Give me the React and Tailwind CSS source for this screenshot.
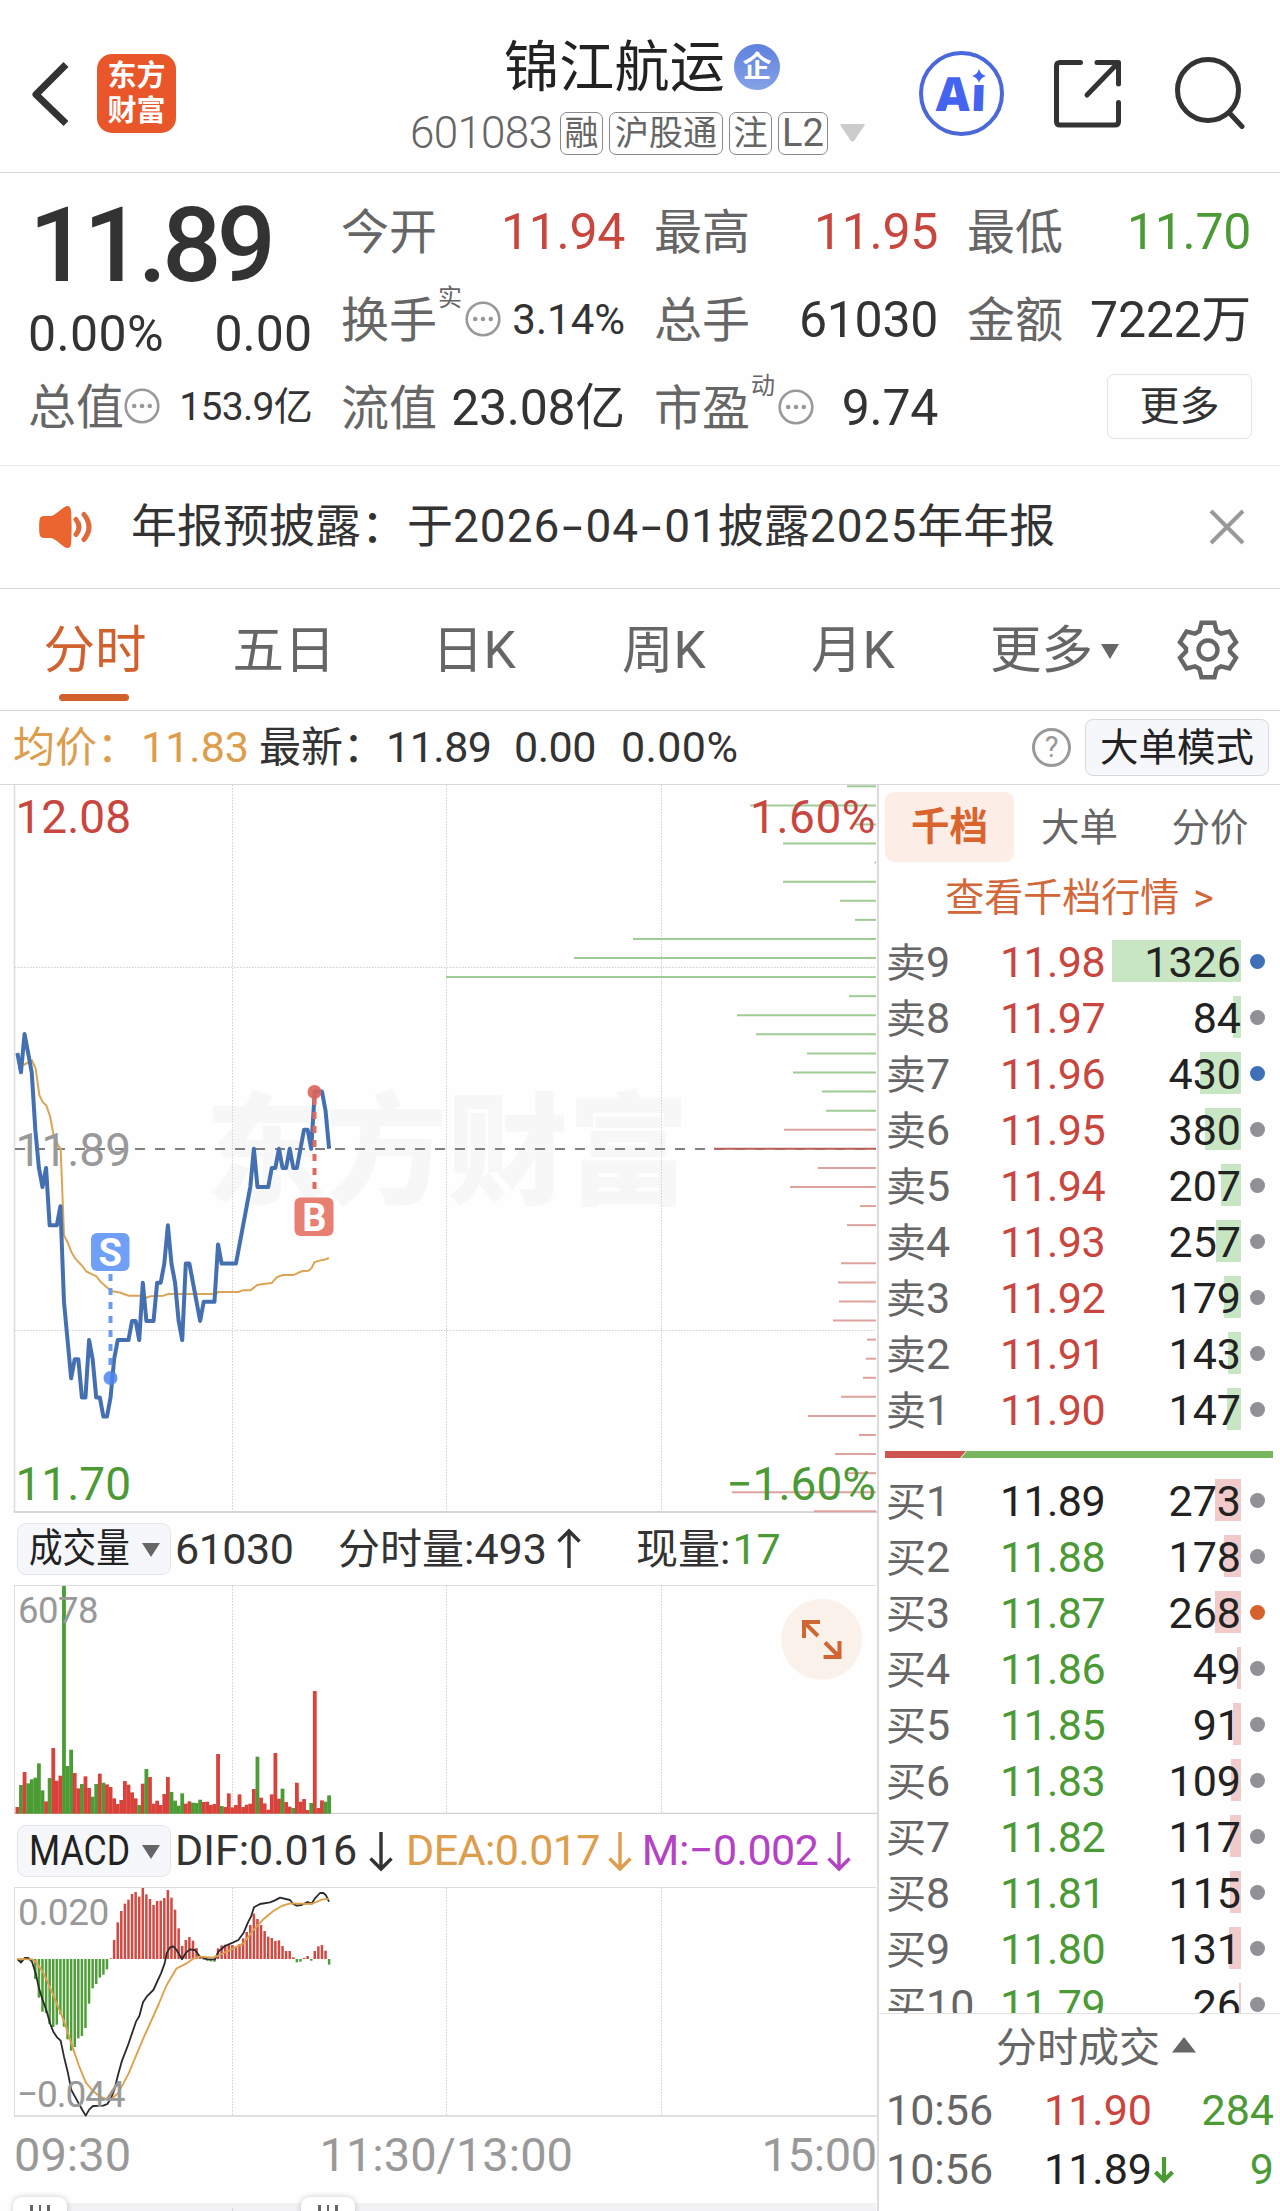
import React from "react";

const RED = "#c8463e";
const GREEN = "#4c9a35";

/* ---------- intraday data ---------- */

// price per minute, in ticks of 0.01 relative to the previous close
const ticks = [
  5, 4, 6, 5, 4, 1, -1, -2, -1, -4, -4, -4, -3, -8, -10, -12, -11, -11, -13, -13, -10, -11, -13, -13, -14, -14, -13, -11,
  -10, -10, -10, -10, -9, -9, -10, -7, -9, -9, -9, -7, -7, -6, -4, -6, -7, -9, -10, -6, -6, -7, -8, -9, -8, -8, -8, -8,
  -5, -6, -6, -6, -6, -6, -5, -4, -3, -2, 0, -2, -2, -2, -2, -1, -1, 0, -1, -1, 0, -1, -1, 0, 1, 1, 0, 3, 3, 3, 2, 0,
];

const average = [
  [52, 578], [63, 600], [74, 603], [85, 598], [96, 594], [107, 612], [118, 668], [128, 682], [139, 690], [150, 712],
  [160, 750], [171, 770], [182, 782], [192, 965], [203, 980], [214, 1000], [225, 1013], [236, 1022], [247, 1030],
  [260, 1042], [290, 1052], [300, 1062], [333, 1083], [360, 1086], [386, 1093], [430, 1093], [440, 1097], [451, 1094],
  [490, 1093], [505, 1089], [645, 1089], [655, 1085], [715, 1085], [730, 1081], [752, 1081], [772, 1070], [790, 1068],
  [815, 1066], [830, 1054], [848, 1049], [880, 1049], [905, 1041], [925, 1040], [935, 1034], [943, 1022], [955, 1019],
  [975, 1016], [987, 1013],
];

// resting order lengths per price level, from the top of the range
const depth = [
  29, 126, 21, 93, 1.5, 93, 36, 21, 243, 302, 430, 27, 139, 120, 69, 83, 54, 50, 92, 162, 58, 86, 16, 29, 0, 35, 38, 37,
  43, 9, 10, 13, 35, 68, 17, 41, 29, 144, 62,
];

const volume = [
  [20, 1], [86, 0], [125, 1], [91, 0], [103, 0], [108, 0], [151, 0], [70, 0], [37, 1], [107, 0], [197, 1], [99, 1],
  [114, 1], [683, 0], [143, 0], [192, 0], [122, 1], [76, 1], [89, 0], [112, 1], [77, 1], [51, 0], [89, 0], [120, 1],
  [93, 0], [88, 1], [80, 1], [46, 1], [29, 1], [41, 1], [98, 1], [87, 1], [64, 1], [46, 1], [26, 0], [90, 1], [134, 0],
  [110, 1], [30, 1], [39, 1], [26, 1], [59, 1], [110, 1], [65, 0], [39, 0], [24, 0], [61, 0], [30, 1], [37, 1], [33, 0],
  [32, 0], [42, 0], [35, 1], [36, 1], [26, 1], [29, 1], [179, 1], [23, 0], [20, 1], [61, 1], [19, 1], [26, 1], [58, 1],
  [20, 1], [27, 1], [30, 1], [74, 1], [171, 0], [48, 1], [31, 1], [12, 1], [58, 1], [182, 1], [45, 1], [75, 0], [35, 1],
  [21, 1], [17, 0], [93, 1], [36, 1], [44, 1], [11, 1], [32, 0], [368, 1], [17, 1], [40, 1], [36, 0], [55, 0],
];

const macd = [
  0, -8, 2, 0, -6, -60, -116, -158, -162, -195, -204, -197, -166, -203, -241, -275, -264, -238, -231, -207, -134, -88,
  -75, -56, -47, -31, 2, 57, 110, 144, 166, 178, 195, 201, 187, 213, 194, 180, 162, 174, 175, 183, 207, 184, 148, 92,
  39, 57, 66, 55, 33, 7, -2, -5, -7, -8, 32, 41, 43, 44, 42, 39, 45, 62, 81, 102, 136, 120, 102, 84, 67, 63, 54, 56, 39,
  24, 24, 5, -10, -8, 3, 9, -5, 24, 38, 42, 25, -17,
];

const dif = [
  [52, 387], [63, 398], [74, 384], [85, 384], [96, 395], [107, 430], [117, 475], [128, 510], [139, 540], [150, 580],
  [160, 605], [171, 622], [182, 632], [192, 680], [203, 725], [214, 780], [225, 800], [236, 820], [247, 840], [257, 857],
  [268, 838], [279, 828], [310, 827], [322, 822], [333, 805], [343, 780], [354, 735], [365, 695], [386, 640], [408, 575],
  [418, 558], [429, 517], [440, 500], [460, 480], [483, 430], [494, 400], [500, 370], [510, 352], [520, 349], [530, 360],
  [546, 388], [558, 368], [570, 358], [585, 360], [600, 380], [622, 388], [645, 388], [655, 365], [675, 348], [700, 337],
  [715, 330], [730, 310], [745, 275], [753, 260], [762, 232], [780, 222], [810, 217], [825, 211], [840, 203], [870, 210],
  [880, 222], [890, 227], [905, 225], [922, 216], [935, 221], [945, 205], [960, 189], [970, 189], [978, 196], [987, 215],
];

const dea = [
  [52, 387], [96, 388], [107, 395], [128, 425], [150, 472], [192, 573], [214, 640], [236, 705], [257, 757], [279, 783],
  [300, 800], [322, 808], [333, 808], [354, 790], [386, 730], [430, 625], [475, 525], [500, 465], [530, 415], [560, 400],
  [580, 386], [600, 380], [640, 383], [665, 372], [700, 355], [730, 340], [760, 300], [790, 268], [820, 243], [845, 228],
  [870, 220], [935, 222], [965, 209], [987, 206],
];

const minuteX = (k) => 17.4 + k * 3.583;
const thirds = (points) => points.map(([x, y]) => `${x / 3},${1830 + y / 3}`).join(" ");

/* ---------- order book ---------- */

const asks = [
  ["卖9", "11.98", "1326", 129, "b"],
  ["卖8", "11.97", "84", 8, "n"],
  ["卖7", "11.96", "430", 41, "b"],
  ["卖6", "11.95", "380", 36, "n"],
  ["卖5", "11.94", "207", 20, "n"],
  ["卖4", "11.93", "257", 25, "n"],
  ["卖3", "11.92", "179", 17, "n"],
  ["卖2", "11.91", "143", 13, "n"],
  ["卖1", "11.90", "147", 14, "n"],
];

const bids = [
  ["买1", "11.89", "273", 26, "n"],
  ["买2", "11.88", "178", 17, "n"],
  ["买3", "11.87", "268", 26, "o"],
  ["买4", "11.86", "49", 4, "n"],
  ["买5", "11.85", "91", 8, "n"],
  ["买6", "11.83", "109", 10, "n"],
  ["买7", "11.82", "117", 11, "n"],
  ["买8", "11.81", "115", 11, "n"],
  ["买9", "11.80", "131", 12, "n"],
  ["买10", "11.79", "26", 2, "n"],
];

const dotClass = { b: "bg-[#3f6fb8]", n: "bg-[#909096]", o: "bg-[#d5622b]" };

function BookRow({ row, bar, priceClass }) {
  const [label, price, amount, width, dot] = row;
  return (
    <div className="flex h-14 shrink-0 items-center text-[43px] leading-none">
      <div className="w-[90px] whitespace-nowrap pl-[7px] pt-[2px] text-[#666]">
        <span className="text-[40px]">{label[0]}</span>
        {label.slice(1)}
      </div>
      <div className={`w-[136px] pt-[2px] text-right tracking-[-0.6px] ${priceClass}`}>{price}</div>
      <div className="relative flex h-[42px] w-[136px] items-center justify-end">
        <div className={`absolute inset-y-0 right-0 ${bar}`} style={{ width }} />
        <span className="relative pt-[2px] text-[#222]">{amount}</span>
      </div>
      <div className={`ml-[9px] size-[15px] rounded-full ${dotClass[dot]}`} />
    </div>
  );
}

/* ---------- small pieces ---------- */

function Tag({ children, pad = "px-[3.5px]" }) {
  return (
    <span className={`flex h-[43px] items-center whitespace-nowrap rounded-[7px] border-[1.5px] border-[#8a8a8a] text-[34px] leading-none text-[#666] ${pad}`}>
      {children}
    </span>
  );
}

function Dots() {
  return (
    <svg className="size-9 shrink-0" viewBox="0 0 36 36" fill="#999">
      <circle cx="18" cy="18" r="16.3" fill="none" stroke="#999" strokeWidth="2.6" />
      <circle cx="10.2" cy="18" r="2.3" />
      <circle cx="18" cy="18" r="2.3" />
      <circle cx="25.8" cy="18" r="2.3" />
    </svg>
  );
}

function Quote({ label, sup, dots, value, size = "text-[50px] tracking-[-0.3px]", className = "text-[#333]" }) {
  return (
    <div className="flex h-[88px] items-center text-[48px] leading-none">
      <span className="pt-[3px] text-[#666]">{label}</span>
      {sup && <span className="relative -top-[21px] w-7 pl-px text-[24px] text-[#666]">{sup}</span>}
      {dots && <Dots />}
      <span className={`ml-auto whitespace-nowrap pt-[2px] ${size} ${className}`}>{value}</span>
    </div>
  );
}

function Arrow({ up, className }) {
  return (
    <svg className={`h-[42px] w-6 shrink-0 ${className}`} viewBox="0 0 24 42" fill="none" stroke="currentColor" strokeWidth="3.4">
      {up ? <path d="M12 40V3M1.500 13.500L12 3l10.500 10.500" /> : <path d="M12 2v37M1.500 28.500L12 39l10.500-10.500" />}
    </svg>
  );
}

function Picker({ children, scale }) {
  return (
    <div className="relative ml-[17px] flex h-[52px] w-[154px] items-center rounded-[9px] border border-[#e3e5e9] bg-[#f6f7fa] pl-[11px]">
      <span className={`origin-left whitespace-nowrap leading-none text-[#222] ${scale}`}>{children}</span>
      <svg className="absolute right-[10px] top-[19px] h-[14px] w-[18px]" viewBox="0 0 18 14" fill="#666">
        <path d="M0 0h18L9 14z" />
      </svg>
    </div>
  );
}

function Grid({ top, bottom }) {
  return (
    <g stroke="#cfcfcf" strokeWidth="1" strokeDasharray="1.500 1.500">
      {[232.5, 446.5, 661.5].map((x) => (
        <path key={x} d={`M${x} ${top}V${bottom}`} />
      ))}
    </g>
  );
}

/* ---------- sections ---------- */

function Header() {
  return (
    <header className="flex h-[173px] border-b border-[#d8d8d8]">
      <div className="flex w-[410px] items-start pl-[30px] pt-[54px]">
        <svg className="mt-[6px] h-[68px] w-10" viewBox="0 0 40 68" fill="none" stroke="#333" strokeWidth="7" strokeLinejoin="round">
          <path d="M36 4.500L6 34.500l30 29" />
        </svg>
        <div className="ml-[27px] flex size-[79px] flex-col items-center justify-center gap-[5px] rounded-[15px] bg-[#e9562a] text-[29px] font-bold leading-[30px] text-white">
          <span>东方</span>
          <span>财富</span>
        </div>
      </div>
      <div className="flex w-[456px] flex-col items-center pt-[38px]">
        <div className="flex h-[58px] items-center pl-[8px] text-[55px] leading-none text-[#222]">
          <span className="tracking-[0.3px]">锦江航运</span>
          <span className="ml-[9px] flex size-[46px] items-center justify-center rounded-full bg-linear-to-b from-[#5f80de] to-[#84a2e6] text-[29px] font-bold text-white">
            企
          </span>
        </div>
        <div className="mt-[15px] flex w-full items-center gap-[6px] text-[44px] leading-none text-[#666]">
          <span className="w-[144px] font-light tracking-[-0.7px]">601083</span>
          <Tag>融</Tag>
          <Tag pad="px-[5px]">沪股通</Tag>
          <Tag>注</Tag>
          <Tag pad="px-[3px]">
            <span className="text-[38px]">L2</span>
          </Tag>
          <svg className="ml-[6px] h-[18px] w-[25px] shrink-0" viewBox="0 0 25 18" fill="#ccc">
            <path d="M1.500 0h22q2 0 1 1.500L14 17q-1.500 1.500-3 0L.5 1.500Q-.5 0 1.500 0z" />
          </svg>
        </div>
      </div>
      <div className="flex items-start pl-[53px] pt-[51px]">
        <div className="relative flex size-[85px] items-center justify-center rounded-full border-4 border-[#4a68da]">
          <span className="skew-x-[-2deg] font-['Open_Sans','Noto_Sans',sans-serif] text-[47px] font-extrabold leading-none tracking-[1px] text-[#4463ee]">
            Ai
          </span>
          <svg className="absolute left-[44px] top-[10px] h-[22px] w-6" viewBox="0 0 24 22">
            <rect x="3" y="2" width="18" height="18" fill="#fff" />
            <path d="M12 4q1.600 5.500 7 7-5.400 1.500-7 7-1.600-5.500-7-7 5.400-1.500 7-7z" fill="#4463ee" />
          </svg>
        </div>
        <svg className="ml-[49px] mt-[7px] size-[72px]" viewBox="0 0 72 72" fill="none" stroke="#333" strokeWidth="5" strokeLinecap="round" strokeLinejoin="round">
          <path d="M27.500 4.500H7q-3.500 0-3.500 3.500v55.500q0 3.500 3.500 3.500h55q3.500 0 3.500-3.500V44.500M44 4.500h21.500V26M64 6L34 37" />
        </svg>
        <svg className="ml-[50px] mt-[4px] size-[74px]" viewBox="0 0 74 74" fill="none" stroke="#333" strokeWidth="5" strokeLinecap="round">
          <circle cx="33" cy="35" r="30.500" />
          <path d="M54 57.500l13 14" />
        </svg>
      </div>
    </header>
  );
}

function Summary() {
  return (
    <section className="flex h-[293px] gap-[29px] border-b border-[#ececec] pl-[28px]">
      <div className="flex w-[284px] flex-col leading-none text-[#333]">
        <div className="flex h-[142px] items-center pl-px pt-[3px] text-[104px] font-medium tracking-[-4.6px]">11.89</div>
        <div className="flex h-9 items-center justify-between pt-[2px] text-[50px]">
          <span className="tracking-[0.4px]">0.00%</span>
          <span>0.00</span>
        </div>
        <div className="mt-[11px]">
          <Quote label="总值" dots size="text-[39px] tracking-[-0.7px]" value="153.9亿" />
        </div>
      </div>
      <div className="w-[284px] pt-[14px]">
        <Quote label="今开" value="11.94" className="text-[#c8463e]" />
        <Quote label="换手" sup="实" dots size="text-[42px]" value="3.14%" />
        <Quote label="流值" value="23.08亿" />
      </div>
      <div className="w-[284px] pt-[14px]">
        <Quote label="最高" value="11.95" className="text-[#c8463e]" />
        <Quote label="总手" value="61030" />
        <Quote label="市盈" sup="动" dots value="9.74" />
      </div>
      <div className="w-[284px] pt-[14px]">
        <Quote label="最低" value="11.70" className="text-[#4c9a35]" />
        <Quote label="金额" value="7222万" />
        <div className="ml-auto mr-[-1px] mt-[11px] flex h-[65px] w-[145px] items-center justify-center rounded-[7px] border border-[#e2e2e2] pt-px text-[40px] leading-none text-[#333]">
          更多
        </div>
      </div>
    </section>
  );
}

function Notice() {
  return (
    <section className="flex h-[123px] items-center border-b border-[#d8d8d8] pl-[39px] text-[46px] leading-none text-[#333]">
      <svg className="h-[44px] w-[54px]" viewBox="0 0 54 44">
        <path d="M5 11h7.500C18 9 23 3 27 1.200q4-1.400 5 4 1.200 17 0 34-1 5-5 3.500C23 41 18 35 12.500 33H5q-4 0-4.500-4-.8-7 0-14Q1 11 5 11z" fill="#ea6530" />
        <path d="M37 14.500q6 7.500 0 15M45 9.500q10 12.500 0 25" fill="none" stroke="#dc6a3c" strokeWidth="5" strokeLinecap="round" />
      </svg>
      <p className="mb-[2px] ml-[38px] whitespace-nowrap">
        年报预披露：于
        <span className="tracking-[1px]">2026</span>
        <span className="inline-block w-[25px] origin-center scale-x-[1.6] text-center">-</span>
        <span className="tracking-[1px]">04</span>
        <span className="inline-block w-[25px] origin-center scale-x-[1.6] text-center">-</span>
        <span className="tracking-[1px]">01</span>
        披露
        <span className="tracking-[1px]">2025</span>
        年年报
      </p>
      <svg className="ml-auto mr-[35px] size-9" viewBox="0 0 36 36" stroke="#999" strokeWidth="4">
        <path d="M2 2l32 32M34 2L2 34" />
      </svg>
    </section>
  );
}

function Tabs() {
  return (
    <nav className="flex h-[122px] items-center border-b border-[#d8d8d8] text-[51.5px] leading-none text-[#666]">
      <div className="relative flex h-full w-[190px] items-center justify-center pt-[3px] text-[#d0622f]">
        分时
        <span className="absolute bottom-[9px] left-[59px] h-[7px] w-[70px] rounded-full bg-[#d0602c]" />
      </div>
      <div className="w-[188px] pt-[3px] text-center">五日</div>
      <div className="w-[192px] pt-[3px] text-center">日K</div>
      <div className="w-[188px] pt-[3px] text-center">周K</div>
      <div className="w-[190px] pt-[3px] text-center">月K</div>
      <div className="flex items-center pl-[42px] pt-[3px]">
        更多
        <svg className="ml-[8px] h-[15px] w-[18px]" viewBox="0 0 18 15" fill="#666">
          <path d="M0 0h18L9 15z" />
        </svg>
      </div>
      <svg className="ml-[57px] h-[62px] w-[64px]" viewBox="-32 -31 64 62" fill="none" stroke="#666" strokeWidth="4.400">
        <path d="M-6.500 -27.300H6.500L8.700 -18.800L13 -16.300L21.500 -18.500L28 -7.800L22 -1.500V1.500L28 7.800L21.500 18.500L13 16.300L8.700 18.800L6.500 27.300H-6.500L-8.700 18.800L-13 16.300L-21.500 18.500L-28 7.800L-22 1.500V-1.500L-28 -7.800L-21.500 -18.500L-13 -16.300L-8.700 -18.800Z" />
        <circle r="9.500" />
      </svg>
    </nav>
  );
}

function InfoBar() {
  return (
    <section className="flex h-[74px] items-center border-b border-[#d8d8d8] pl-[13px] text-[43px] leading-none text-[#333]">
      <span className="w-[246px] text-[#dc9d4c]">
        <span className="inline-block w-[128px] text-[42px]">均价：</span>
        11.83
      </span>
      <span className="w-[255px]">
        <span className="inline-block w-[127px] text-[42px]">最新：</span>
        <span className="tracking-[-0.5px]">11.89</span>
      </span>
      <span className="w-[107px] tracking-[-0.5px]">0.00</span>
      <span className="tracking-[0.4px]">0.00%</span>
      <div className="ml-auto mr-[11px] flex items-center gap-[14px]">
        <div className="flex size-[39px] items-center justify-center rounded-full border-[3px] border-[#999] text-[29px] text-[#999]">
          ?
        </div>
        <div className="flex h-[57px] w-[184px] items-center justify-center rounded-[8px] border border-[#d5d8de] bg-[#f6f7fb] pt-[2px] text-[38.5px] text-[#222]">
          大单模式
        </div>
      </div>
    </section>
  );
}

function PriceChart() {
  const line = ticks.map((t, k) => `${minuteX(k)},${1148.8 - t * 19.13}`).join(" ");
  const avg = average.map(([x, y]) => `${x / 3},${780 + y / 2.119}`).join(" ");
  return (
    <svg className="block h-[728px] w-[877px] shrink-0" viewBox="0 785 877 728" fontSize="46">
      <text x="205" y="1194" fontSize="121" fontWeight="900" fill="#f7f7f7">
        东方财富
      </text>
      <Grid top={785} bottom={1512} />
      <g stroke="#cfcfcf" strokeDasharray="1.500 1.500">
        <path d="M15 967.500H876M15 1330.500H876" />
      </g>
      <path d="M14.500 785V1512" stroke="#dcdcdc" strokeWidth="1.500" />
      <path d="M14 1512H877" stroke="#d5d5d5" strokeWidth="2" />
      <path d="M15 1149H876" stroke="#808080" strokeWidth="2" strokeDasharray="10 10" />
      {depth.map((w, i) => (
        <path
          key={i}
          d={`M876 ${786.3 + i * 19.08}h${-w}`}
          stroke={i < 18 ? "#9fcb95" : i === 19 ? "#b9605b" : "#dda29e"}
          strokeWidth="2"
        />
      ))}
      <polyline points={avg} fill="none" stroke="#dca455" strokeWidth="2" />
      <polyline points={line} fill="none" stroke="#4470b1" strokeWidth="4" strokeLinejoin="round" />
      <g fill={RED}>
        <text x="15.500" y="833">12.08</text>
        <text x="876" y="833" textAnchor="end" letterSpacing=".5">1.60%</text>
      </g>
      <text x="15.500" y="1166" fill="#999">11.89</text>
      <g fill={GREEN}>
        <text x="15.500" y="1499.500">11.70</text>
        <text x="876" y="1499.500" textAnchor="end">−1.60%</text>
      </g>
      <path d="M110.500 1274V1372" stroke="#6b9af0" strokeWidth="4" strokeDasharray="7 7" />
      <circle cx="110.500" cy="1378" r="7" fill="#4d85ee" fillOpacity=".85" />
      <rect x="91" y="1233" width="38.500" height="38" rx="6" fill="#6f9ff6" />
      <path d="M314.500 1098V1196" stroke="#df6a60" strokeWidth="4" strokeDasharray="7 7" />
      <circle cx="314.500" cy="1092" r="7" fill="#dd6459" fillOpacity=".9" />
      <rect x="294.500" y="1197.500" width="39" height="38.500" rx="6" fill="#e77f72" />
      <g fill="#fff" fontSize="38" fontWeight="700" textAnchor="middle">
        <text x="110.300" y="1265.500">S</text>
        <text x="314.300" y="1230.500">B</text>
      </g>
    </svg>
  );
}

function VolumeChart() {
  return (
    <svg className="block h-[229px] w-[877px] shrink-0" viewBox="0 1585 877 229">
      <Grid top={1586} bottom={1813} />
      <path d="M14 1585.500H876M14.500 1585V1814" stroke="#dedede" fill="none" />
      <path d="M14 1813.500H877" stroke="#d2d2d2" strokeWidth="1.500" />
      {volume.map(([h, up], k) => (
        <rect key={k} x={minuteX(k) - 1.9} y={1813.700 - h / 3} width="3.800" height={h / 3} fill={up ? "#d9423a" : "#4b9c34"} />
      ))}
      <text x="18" y="1622.500" fontSize="36.500" fill="#999" letterSpacing="-.5">
        6078
      </text>
      <circle cx="821.700" cy="1639.300" r="40.500" fill="#fbf1eb" />
      <path
        d="M804 1638V1622H820M804 1622l14 14M839.500 1641V1657H823.500M839.500 1657l-14.500-14.500"
        fill="none"
        stroke="#cf6634"
        strokeWidth="4"
      />
    </svg>
  );
}

function MacdChart() {
  return (
    <svg className="block h-[230px] w-[877px] shrink-0" viewBox="0 1887 877 230">
      <Grid top={1888} bottom={2115} />
      <path d="M14 1887.500H876M14.500 1887V2116" stroke="#dedede" fill="none" />
      <path d="M14 2116H877" stroke="#dedede" strokeWidth="2" />
      {macd.map((v, k) => (
        <rect
          key={k}
          x={minuteX(k) - 1.25}
          y={v > 0 ? 1959 - v / 3 : 1959}
          width="2.500"
          height={Math.abs(v) / 3}
          fill={v > 0 ? "#d04a42" : "#4f9e38"}
        />
      ))}
      <polyline points={thirds(dif)} fill="none" stroke="#2a2a2a" strokeWidth="1.800" strokeLinejoin="round" />
      <polyline points={thirds(dea)} fill="none" stroke="#dda04c" strokeWidth="1.900" strokeLinejoin="round" />
      <g fontSize="37" fill="#999">
        <text x="18" y="1925" letterSpacing="-.4">0.020</text>
        <text x="17" y="2106.500" letterSpacing="-1.1">−0.044</text>
      </g>
    </svg>
  );
}

function Handle({ className }) {
  return (
    <div className={`absolute top-[5px] flex h-10 w-[54px] justify-center gap-[6px] rounded-[9px] bg-white pt-[8px] shadow-[0_0_6px_rgba(0,0,0,0.2)] ${className}`}>
      <span className="h-8 w-[2.5px] bg-[#666]" />
      <span className="h-8 w-[2.5px] bg-[#666]" />
      <span className="h-8 w-[2.5px] bg-[#666]" />
    </div>
  );
}

function ChartColumn() {
  return (
    <div className="flex w-[877px] flex-col text-[43px] leading-none text-[#333]">
      <PriceChart />
      <div className="flex h-[72px] shrink-0 items-center">
        <Picker scale="text-[39.5px] scale-x-[0.85]">成交量</Picker>
        <span className="ml-[4px] w-[163px] tracking-[-0.5px]">61030</span>
        <span className="whitespace-nowrap">
          <span className="text-[42px]">分时量</span>:493
        </span>
        <Arrow up className="ml-[10px]" />
        <span className="ml-[55px] whitespace-nowrap">
          <span className="text-[42px]">现量</span>:<span className="pl-[2px] text-[#4c9a35]">17</span>
        </span>
      </div>
      <VolumeChart />
      <div className="flex h-[73px] shrink-0 items-center whitespace-nowrap">
        <Picker scale="text-[42px] scale-x-[0.85]">MACD</Picker>
        <span className="ml-[4px]">DIF:0.016</span>
        <Arrow className="ml-[12px]" />
        <span className="ml-[13px] flex items-center text-[#dc9d4c]">
          <span className="tracking-[-0.6px]">DEA:0.017</span>
          <Arrow className="ml-[8px]" />
        </span>
        <span className="ml-[10px] flex items-center text-[#b443c4]">
          <span className="tracking-[-0.5px]">M:−0.002</span>
          <Arrow className="ml-[9px]" />
        </span>
      </div>
      <MacdChart />
      <div className="relative flex h-[75px] shrink-0 items-center justify-between pl-[14px] text-[47px] text-[#999]">
        <span>09:30</span>
        <span>11:30/13:00</span>
        <span className="tracking-[-0.3px]">15:00</span>
      </div>
      <div className="relative h-[19px] overflow-hidden">
        <div className="ml-[40px] mt-[11px] h-2 w-[836px] bg-[#f2f2f4]" />
        <span className="absolute left-[232px] top-[16px] h-2 w-px bg-[#d5d5d5]" />
        <Handle className="left-[13px]" />
        <Handle className="left-[301px]" />
      </div>
    </div>
  );
}

function BookColumn() {
  return (
    <aside className="flex w-[403px] flex-col border-l-2 border-[#dcdcdc] leading-none">
      <div className="flex h-[77px] items-end pl-[6px] text-[38.5px] text-[#666]">
        <span className="flex h-[70px] w-[129px] items-center justify-center rounded-[9px] bg-[#fceee7] pt-px font-bold text-[#d9642e]">千档</span>
        <span className="flex h-[70px] w-[131px] items-center justify-center pt-[2px]">大单</span>
        <span className="flex h-[70px] w-[130px] items-center justify-center pt-[2px]">分价</span>
      </div>
      <div className="flex h-[71px] items-center justify-center pt-[2px] text-[39px] text-[#d2673a]">
        查看千档行情<span className="ml-[14px]">&gt;</span>
      </div>
      <div className="flex flex-col">
        {asks.map((row) => (
          <BookRow key={row[0]} row={row} bar="bg-[#c8e6c4]" priceClass="text-[#c8463e]" />
        ))}
      </div>
      <svg className="ml-[6px] mt-[14px] h-[7px] w-[388px] shrink-0" viewBox="0 0 388 7">
        <path d="M0 0H81L75 7H0z" fill="#cd5550" />
        <path d="M82 0H388V7H76z" fill="#78b65d" />
      </svg>
      <div className="mt-[14px] flex h-[541px] shrink-0 flex-col overflow-hidden">
        {bids.map((row, i) => (
          <BookRow key={row[0]} row={row} bar="bg-[#f0cbca]" priceClass={i === 0 ? "text-[#222]" : "text-[#4c9a35]"} />
        ))}
      </div>
      <div className="flex h-[66px] shrink-0 items-center gap-3 border-t border-[#e2e2e2] pl-[117px] pt-[4px] text-[41px] text-[#666]">
        分时成交
        <svg className="mb-[8px] h-4 w-6" viewBox="0 0 24 16" fill="#666">
          <path d="M12 0l12 15.500H0z" />
        </svg>
      </div>
      <div className="flex h-[60px] shrink-0 items-center pl-[7px] pt-[2px] text-[43px] text-[#666]">
        <span className="w-[158px]">10:56</span>
        <span className="text-[#c8463e]">11.90</span>
        <span className="ml-auto mr-[6px] text-[#4c9a35]">284</span>
      </div>
      <div className="flex h-[59px] shrink-0 items-center pl-[7px] pt-[2px] text-[43px] text-[#666]">
        <span className="w-[158px]">10:56</span>
        <span className="text-[#222]">11.89</span>
        <svg className="ml-px h-[28px] w-[22px]" viewBox="0 0 22 28" fill="none" stroke="#4c9a35" strokeWidth="4.200">
          <path d="M11 1v23M2.500 16L11 24.500 19.500 16" />
        </svg>
        <span className="ml-auto mr-[6px] text-[#4c9a35]">9</span>
      </div>
    </aside>
  );
}

export default function App() {
  return (
    <main className="h-[2211px] w-[1280px] overflow-hidden bg-[#fefefe] font-['Roboto','Noto_Sans_CJK_SC',sans-serif]">
      <Header />
      <Summary />
      <Notice />
      <Tabs />
      <InfoBar />
      <div className="flex h-[1426px]">
        <ChartColumn />
        <BookColumn />
      </div>
    </main>
  );
}
